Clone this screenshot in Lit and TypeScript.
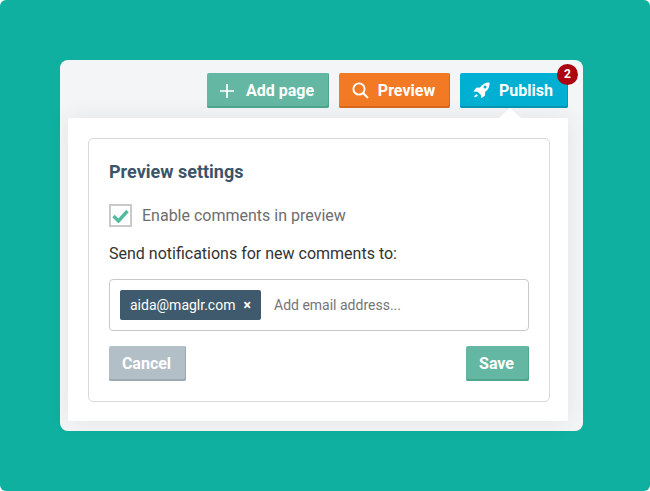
import { LitElement, html, css } from "lit";
import { customElement } from "lit/decorators.js";

@customElement("app-root")
export class AppRoot extends LitElement {
  static styles = css`
    :host {
      display: block;
      width: 650px;
      height: 491px;
      background: #fff;
      font-family: Roboto, "Liberation Sans", sans-serif;
    }
    * { box-sizing: border-box; }
    .page {
      width: 650px;
      height: 491px;
      background: #0fb09f;
      border-radius: 6px;
      padding: 60px 67px 60px 60px;
    }
    .window {
      width: 523px;
      height: 371px;
      background: #f4f5f7;
      border-radius: 8px;
      padding: 13px 15px 10px 8px;
      display: flex;
      flex-direction: column;
      gap: 10px;
    }
    .toolbar {
      display: flex;
      justify-content: flex-end;
      gap: 10px;
      height: 35px;
    }
    .btn {
      position: relative;
      display: flex;
      align-items: center;
      justify-content: center;
      height: 35px;
      border: 0;
      border-radius: 2px;
      color: #fff;
      font: 700 16px/19px Roboto, sans-serif;
      white-space: nowrap;
    }
    .green { background: #64b8a3; box-shadow: inset -1px -2px 0 #4ea68f; }
    .orange { background: #f37a25; box-shadow: inset -1px -2px 0 #d9691c; }
    .blue { background: #00b0d3; box-shadow: inset -1px -2px 0 #0796b4; }
    .grey { background: #b2bfc7; box-shadow: inset -1px -2px 0 #9aa9b2; }
    .add { width: 122px; gap: 12px; padding-right: 2px; }
    .preview { width: 111px; gap: 9px; padding-right: 2px; }
    .publish { width: 108px; gap: 9px; padding-right: 2px; }
    .cancel { width: 77px; padding-right: 2px; }
    .save { width: 63px; padding-right: 2px; }
    .badge {
      position: absolute;
      top: -9px;
      right: -10px;
      width: 21px;
      height: 21px;
      border-radius: 50%;
      background: #ac0410;
      color: #fff;
      font: 700 12px/21px Roboto, sans-serif;
      text-align: center;
    }
    .panel {
      position: relative;
      width: 500px;
      height: 303px;
      background: #fff;
      border-radius: 2px;
      padding: 20px 18px 19px 20px;
      box-shadow: 0 0 22px rgba(40, 50, 60, 0.09);
    }
    .arrow {
      position: absolute;
      top: -10px;
      left: 431px;
      width: 0;
      height: 0;
      border-left: 11px solid transparent;
      border-right: 11px solid transparent;
      border-bottom: 10px solid #fff;
    }
    .card {
      height: 264px;
      border: 1px solid #d9d9d9;
      border-radius: 5px;
      padding: 20px;
      display: flex;
      flex-direction: column;
    }
    h2 {
      margin: 2px 0 0;
      font: 700 18px/21px Roboto, sans-serif;
      color: #3b5568;
    }
    .check-row {
      display: flex;
      align-items: center;
      gap: 10px;
      margin-top: 22px;
      color: #6d6d6d;
      font: 400 16px/23px Roboto, sans-serif;
    }
    .box {
      width: 23px;
      height: 23px;
      border: 2px solid #c9c9c9;
      display: flex;
      align-items: center;
      justify-content: center;
    }
    .label {
      margin-top: 17px;
      color: #333;
      font: 400 16px/19px Roboto, sans-serif;
    }
    .field {
      margin-top: 16px;
      height: 52px;
      border: 1px solid #c8c8c8;
      border-radius: 4px;
      padding: 0 10px;
      display: flex;
      align-items: center;
      gap: 13px;
    }
    .tag {
      width: 141px;
      height: 30px;
      border-radius: 2px;
      background: #3f5a6c;
      color: #fff;
      font: 400 14px/30px Roboto, sans-serif;
      padding-left: 10px;
      display: flex;
      gap: 8px;
    }
    .x { font-weight: 700; }
    .placeholder { color: #757575; font: 400 14px/20px Roboto, sans-serif; }
    .actions {
      margin-top: 15px;
      display: flex;
      justify-content: space-between;
    }
  `;

  render() {
    return html`
      <div class="page">
        <div class="window">
          <div class="toolbar">
            <div class="btn green add">
              <svg width="14" height="14" viewBox="0 0 14 14"><path d="M7 0v14M0 7h14" stroke="#fff" stroke-width="1.7" fill="none"/></svg>
              <span>Add page</span>
            </div>
            <div class="btn orange preview">
              <svg width="17" height="17" viewBox="0 0 17 17"><circle cx="7" cy="7" r="5.6" stroke="#fff" stroke-width="1.9" fill="none"/><path d="M11 11l5 5" stroke="#fff" stroke-width="2" fill="none"/></svg>
              <span>Preview</span>
            </div>
            <div class="btn blue publish">
              <svg width="17" height="17" viewBox="0 0 17 17"><path fill="#fff" d="M16.6.4c.2 3.8-1 7-4.400 9.400l-.3 3.900-3.600 2.600-.4-3.400-3.300-3.100-4.200-.4 2.800-3.600 3.900-.3C9.500 1.700 12.800.2 16.600.4zM12 3.400a1.500 1.500 0 1 0 0 3 1.500 1.500 0 0 0 0-3zM3.400 12.200l1.500 1.400c-.8 1-2 1.500-3.700 1.600.1-1.500.9-2.400 2.200-3z"/></svg>
              <span>Publish</span>
              <div class="badge">2</div>
            </div>
          </div>
          <div class="panel">
            <div class="arrow"></div>
            <div class="card">
              <h2>Preview settings</h2>
              <div class="check-row">
                <div class="box">
                  <svg width="17" height="14" viewBox="0 0 17 14"><path d="M1.500 7l5 5L15.500 2" stroke="#52bb9f" stroke-width="3.400" fill="none"/></svg>
                </div>
                <span>Enable comments in preview</span>
              </div>
              <div class="label">Send notifications for new comments to:</div>
              <div class="field">
                <div class="tag"><span>aida@maglr.com</span><span class="x">×</span></div>
                <span class="placeholder">Add email address...</span>
              </div>
              <div class="actions">
                <div class="btn grey cancel">Cancel</div>
                <div class="btn green save">Save</div>
              </div>
            </div>
          </div>
        </div>
      </div>
    `;
  }
}
